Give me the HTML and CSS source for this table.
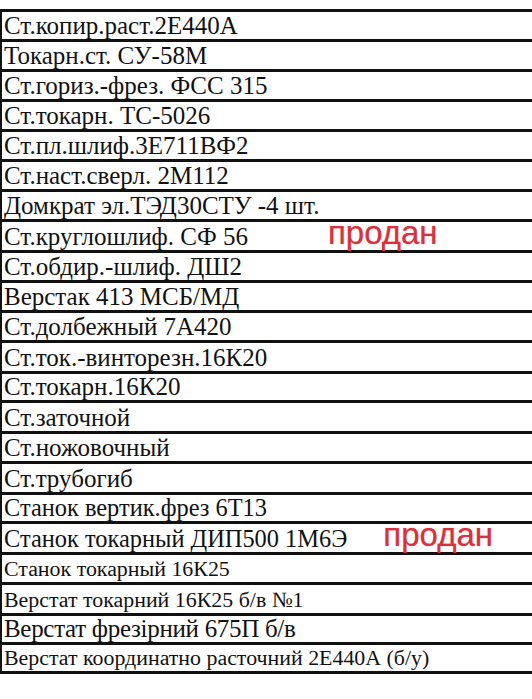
FILE: index.html
```html
<!DOCTYPE html>
<html lang="ru">
<head>
<meta charset="utf-8">
<title>Список станков</title>
<link rel="stylesheet" href="styles.css">
</head>
<body>
<div class="sheet">
  <div class="row"><span class="t">Ст.копир.раст.2Е440А</span></div>
  <div class="row"><span class="t">Токарн.ст. СУ-58М</span></div>
  <div class="row"><span class="t">Ст.гориз.-фрез. ФСС 315</span></div>
  <div class="row"><span class="t">Ст.токарн. ТС-5026</span></div>
  <div class="row"><span class="t">Ст.пл.шлиф.3Е711ВФ2</span></div>
  <div class="row"><span class="t">Ст.наст.сверл. 2М112</span></div>
  <div class="row"><span class="t">Домкрат эл.ТЭД30СТУ -4 шт.</span></div>
  <div class="row tall"><span class="t">Ст.круглошлиф. СФ 56</span><span class="sold sold-a">продан</span></div>
  <div class="row"><span class="t">Ст.обдир.-шлиф. ДШ2</span></div>
  <div class="row"><span class="t">Верстак 413 МСБ/МД</span></div>
  <div class="row"><span class="t">Ст.долбежный 7А420</span></div>
  <div class="row tall"><span class="t">Ст.ток.-винторезн.16К20</span></div>
  <div class="row short"><span class="t">Ст.токарн.16К20</span></div>
  <div class="row tall"><span class="t">Ст.заточной</span></div>
  <div class="row"><span class="t">Ст.ножовочный</span></div>
  <div class="row tall"><span class="t">Ст.трубогиб</span></div>
  <div class="row short"><span class="t t-m">Станок вертик.фрез 6Т13</span></div>
  <div class="row tall"><span class="t t-m">Станок токарный ДИП500 1М6Э</span><span class="sold sold-b">продан</span></div>
  <div class="row"><span class="t t-s">Станок токарный 16К25</span></div>
  <div class="row tall"><span class="t t-s">Верстат токарний 16К25 б/в №1</span></div>
  <div class="row short"><span class="t t-w">Верстат фрезірний 675П б/в</span></div>
  <div class="row short last"><span class="t t-s">Верстат координатно расточний 2Е440А (б/у)</span></div>
</div>
</body>
</html>
```
FILE: styles.css
```css
html, body {
  margin: 0;
  padding: 0;
  background: #ffffff;
}
body {
  padding-top: 9px;
  color: #111;
  font-family: "Liberation Serif", serif;
}
.sheet {
  border-left: 2px solid #111;
}
.row {
  display: flex;
  align-items: flex-end;
  height: 27px;
  border-top: 3px solid #111;
  padding-left: 2px;
}
.row.tall { height: 28px; }
.row.short { height: 26px; }
.row.last {
  border-bottom: 3px solid #111;
}
.t {
  font-family: "Liberation Serif", serif;
  font-size: 25px;
  line-height: 27px;
  white-space: nowrap;
}
.t-m { font-size: 24.4px; }
.t-s { font-size: 21.9px; line-height: 26px; }
.t-w { font-size: 25px; letter-spacing: -0.3px; }
.sold {
  font-family: "Liberation Sans", sans-serif;
  font-size: 33px;
  line-height: 27px;
  margin-bottom: 4px;
  color: #d8323c;
  text-shadow: 0 0 1px rgba(216, 50, 60, 0.55);
}
.sold-a { margin-left: 80px; }
.sold-b { margin-left: 36px; }
```
